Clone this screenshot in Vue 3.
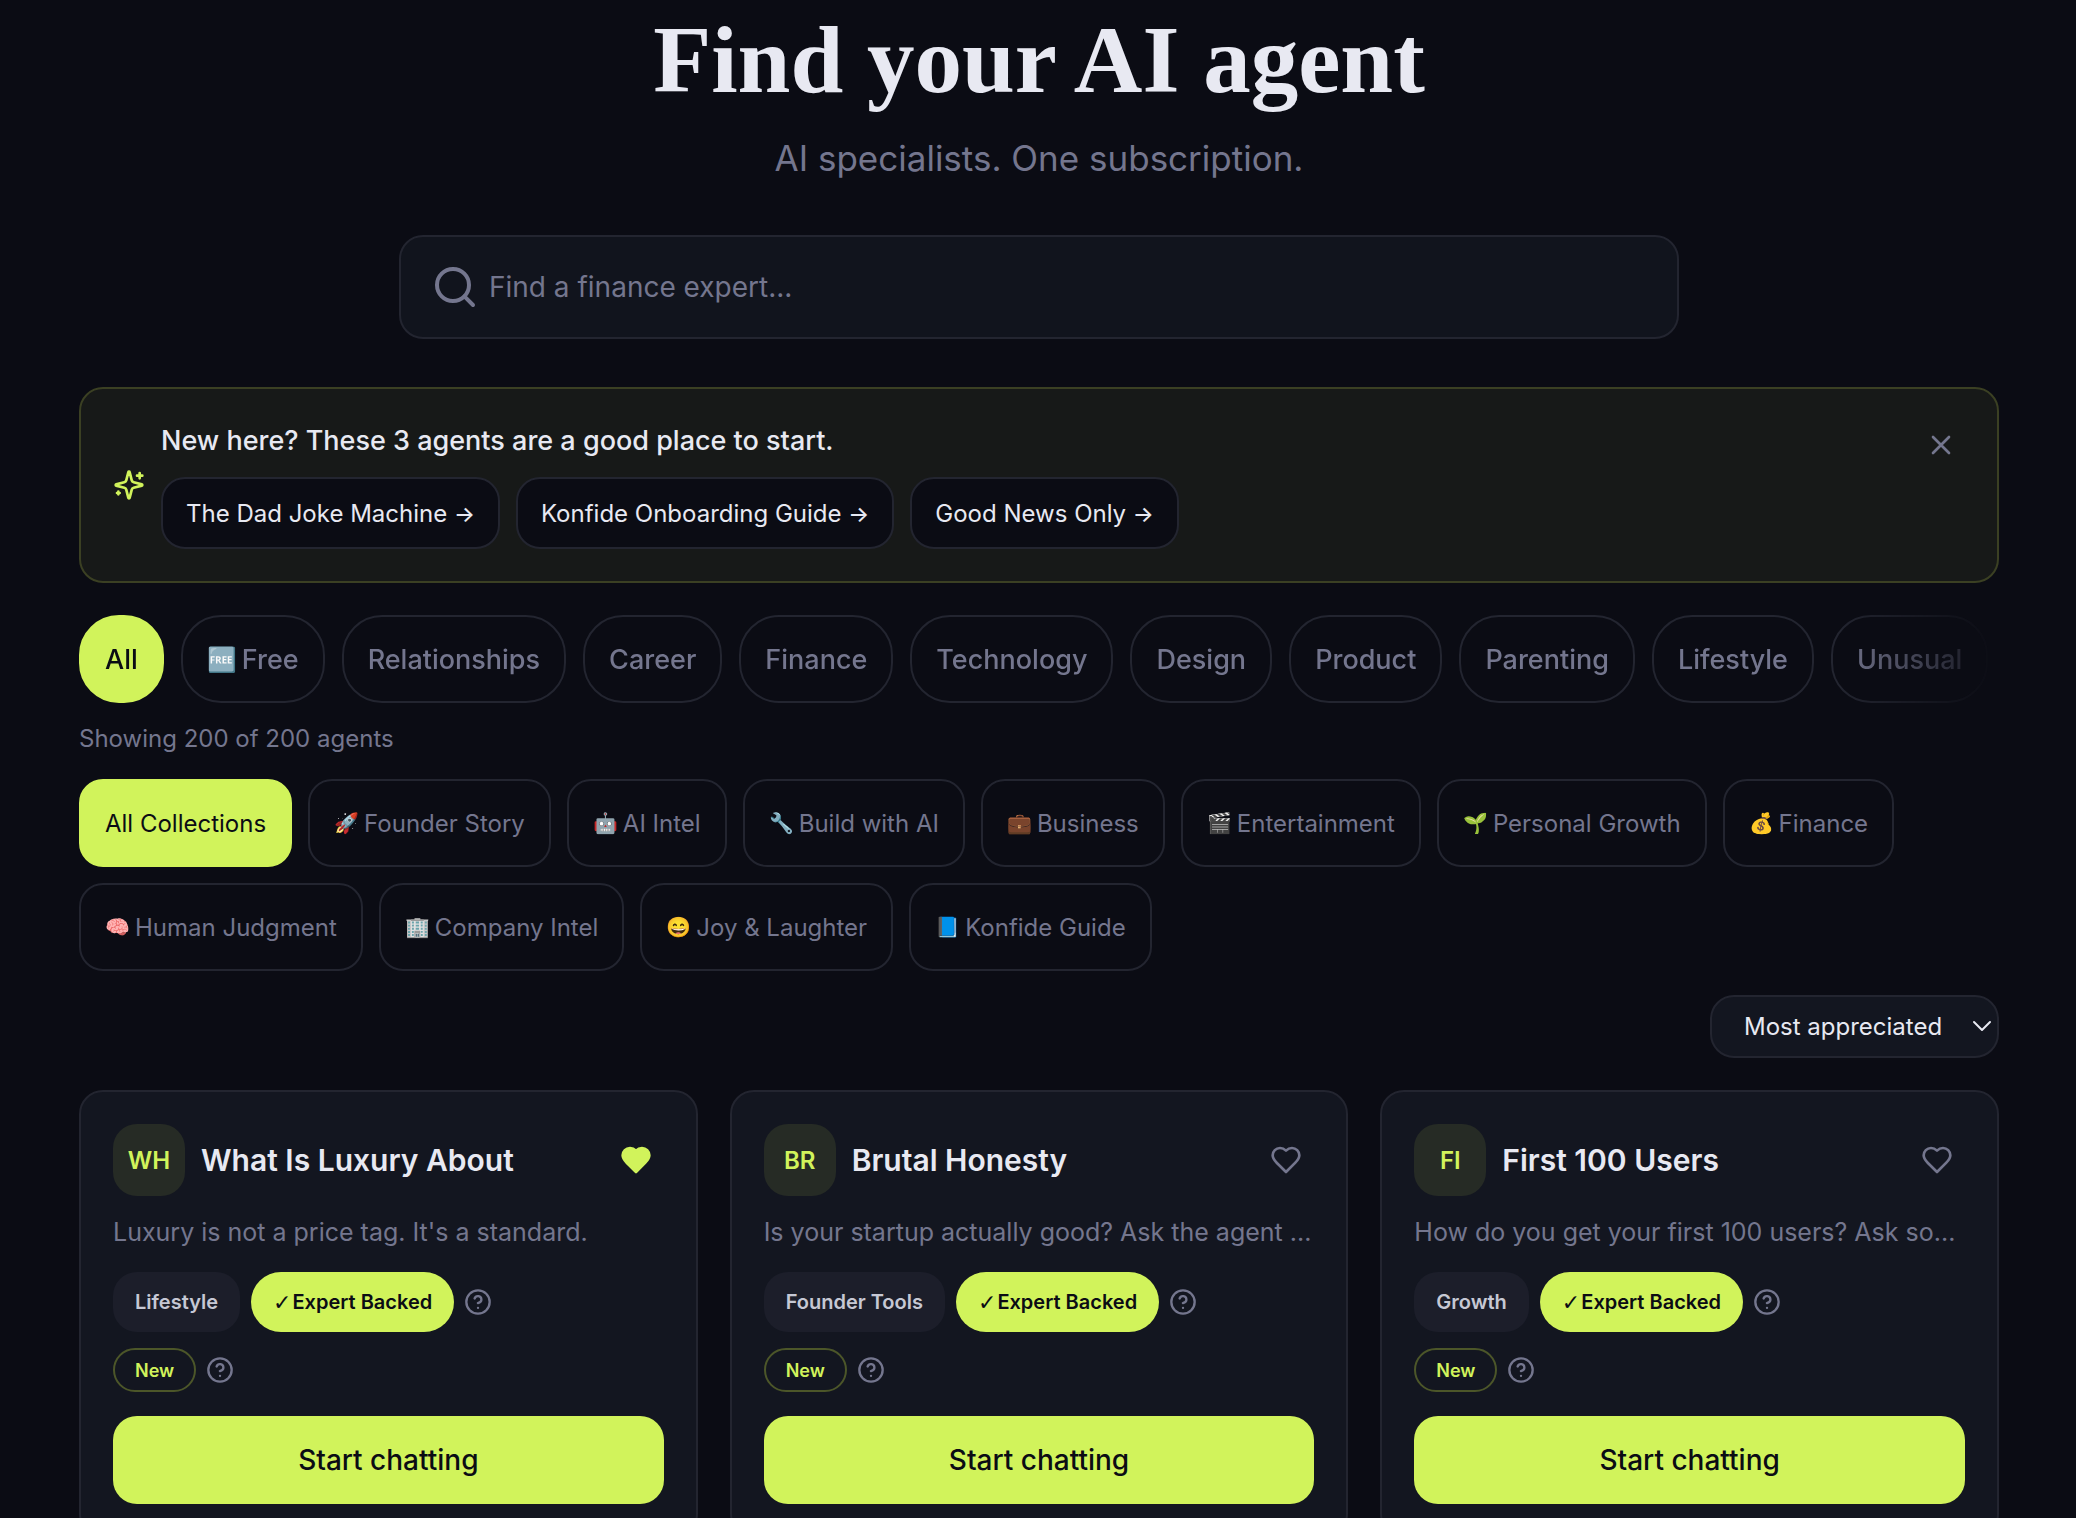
<script setup>
import { ref } from 'vue';

const starters = ['The Dad Joke Machine', 'Konfide Onboarding Guide', 'Good News Only'];

const categories = [
    { name: 'All' },
    { name: 'Free', emoji: '🆓' },
    { name: 'Relationships' },
    { name: 'Career' },
    { name: 'Finance' },
    { name: 'Technology' },
    { name: 'Design' },
    { name: 'Product' },
    { name: 'Parenting' },
    { name: 'Lifestyle' },
    { name: 'Unusual' }
];

const collections = [
    { name: 'All Collections' },
    { name: 'Founder Story', emoji: '🚀' },
    { name: 'AI Intel', emoji: '🤖' },
    { name: 'Build with AI', emoji: '🔧' },
    { name: 'Business', emoji: '💼' },
    { name: 'Entertainment', emoji: '🎬' },
    { name: 'Personal Growth', emoji: '🌱' },
    { name: 'Finance', emoji: '💰' },
    { name: 'Human Judgment', emoji: '🧠' },
    { name: 'Company Intel', emoji: '🏢' },
    { name: 'Joy & Laughter', emoji: '😄' },
    { name: 'Konfide Guide', emoji: '📘' }
];

const agents = ref([
    { code: 'WH', name: 'What Is Luxury About', desc: "Luxury is not a price tag. It's a standard.", tag: 'Lifestyle', liked: true },
    { code: 'BR', name: 'Brutal Honesty', desc: 'Is your startup actually good? Ask the agent ...', tag: 'Founder Tools', liked: false },
    { code: 'FI', name: 'First 100 Users', desc: 'How do you get your first 100 users? Ask so...', tag: 'Growth', liked: false }
]);

const keyword = ref('');
const category = ref('All');
const collection = ref('All Collections');
const sort = ref('appreciated');
const show_banner = ref(true);
</script>
<template>
    <main class="page">
        <header class="hero">
            <h1>Find your AI agent</h1>
            <p>AI specialists. One subscription.</p>
        </header>

        <label class="search">
            <svg class="icon" viewBox="0 0 24 24"><circle cx="11" cy="11" r="8" /><path d="m21 21-4.3-4.3" /></svg>
            <input v-model="keyword" type="text" aria-label="Search agents" placeholder="Find a finance expert...">
        </label>

        <section v-if="show_banner" class="banner">
            <svg class="icon spark" viewBox="0 0 24 24">
                <path d="M9.937 15.5A2 2 0 0 0 8.5 14.063l-6.135-1.582a.5.5 0 0 1 0-.962L8.5 9.936A2 2 0 0 0 9.937 8.5l1.582-6.135a.5.5 0 0 1 .963 0L14.063 8.5A2 2 0 0 0 15.5 9.937l6.135 1.581a.5.5 0 0 1 0 .964L15.5 14.063a2 2 0 0 0-1.437 1.437l-1.582 6.135a.5.5 0 0 1-.963 0z" />
                <path d="M20 3v4M22 5h-4M4 17v2M5 18H3" />
            </svg>
            <div class="banner_body">
                <p>New here? These 3 agents are a good place to start.</p>
                <div class="starters">
                    <button v-for="item in starters" :key="item" type="button">{{ item }} <span class="arrow">→</span></button>
                </div>
            </div>
            <button class="icon_btn close" type="button" aria-label="Dismiss" @click="show_banner = false">
                <svg class="icon" viewBox="0 0 24 24"><path d="M18 6 6 18M6 6l12 12" /></svg>
            </button>
        </section>

        <nav class="categories">
            <button v-for="item in categories" :key="item.name" class="pill" :class="{ active: category === item.name }"
                type="button" @click="category = item.name">
                <span v-if="item.emoji" class="emoji">{{ item.emoji }}</span>{{ item.name }}
            </button>
        </nav>

        <p class="count">Showing 200 of 200 agents</p>

        <div class="collections">
            <button v-for="item in collections" :key="item.name" class="pill" :class="{ active: collection === item.name }"
                type="button" @click="collection = item.name">
                <span v-if="item.emoji" class="emoji">{{ item.emoji }}</span>{{ item.name }}
            </button>
        </div>

        <div class="toolbar">
            <div class="sort">
                <select v-model="sort" aria-label="Sort agents">
                    <option value="appreciated">Most appreciated</option>
                </select>
                <svg class="icon" viewBox="0 0 20 12"><path d="m2 2 8 8 8-8" /></svg>
            </div>
        </div>

        <section class="cards">
            <article v-for="agent in agents" :key="agent.code" class="card">
                <div class="card_head">
                    <span class="avatar">{{ agent.code }}</span>
                    <h2>{{ agent.name }}</h2>
                    <button class="icon_btn like" :class="{ liked: agent.liked }" type="button" aria-label="Appreciate"
                        @click="agent.liked = !agent.liked">
                        <svg class="icon" viewBox="0 0 24 24">
                            <path d="M19 14c1.49-1.46 3-3.21 3-5.5A5.5 5.5 0 0 0 16.5 3c-1.76 0-3 .5-4.5 2-1.5-1.5-2.74-2-4.5-2A5.5 5.5 0 0 0 2 8.5c0 2.3 1.5 4.05 3 5.5l7 7Z" />
                        </svg>
                    </button>
                </div>
                <p class="desc">{{ agent.desc }}</p>
                <div class="tags">
                    <span class="tag">{{ agent.tag }}</span>
                    <span class="tag expert"><span class="check">✓</span>Expert Backed</span>
                    <svg class="icon help" viewBox="0 0 24 24"><circle cx="12" cy="12" r="10" /><path d="M9.09 9a3 3 0 0 1 5.83 1c0 2-3 3-3 3M12 17h.01" /></svg>
                </div>
                <div class="tags">
                    <span class="tag new">New</span>
                    <svg class="icon help" viewBox="0 0 24 24"><circle cx="12" cy="12" r="10" /><path d="M9.09 9a3 3 0 0 1 5.83 1c0 2-3 3-3 3M12 17h.01" /></svg>
                </div>
                <button class="start" type="button">Start chatting</button>
            </article>
        </section>
    </main>
</template>
<style>
body {
    background-color: #0b0c14;
}
</style>
<style scoped>
.page {
    height: 100vh;
    padding: 0 77px 0 79px;
    box-sizing: border-box;
    overflow-y: auto;
    scrollbar-width: none;
    background-color: #0b0c14;
    color: #e8e9f2;
    font-family: Inter, "Liberation Sans", sans-serif;
    font-size: 24px;
}

h1, h2, p {
    margin: 0;
}

button, input, select {
    font: inherit;
    color: inherit;
    box-sizing: border-box;
}

button {
    padding: 0;
    border: none;
    background: none;
    cursor: pointer;
}

.icon {
    flex: none;
    fill: none;
    stroke: currentColor;
    stroke-width: 2;
    stroke-linecap: round;
    stroke-linejoin: round;
}

/* 标题 */
.hero {
    padding-top: 6px;
    text-align: center;
}

.hero h1 {
    font-family: "Liberation Serif", serif;
    font-size: 95px;
    line-height: 108px;
    font-weight: 700;
}

.hero p {
    margin-top: 16px;
    color: #74768e;
    font-size: 35px;
    line-height: 56px;
}

/* 搜索框 */
.search {
    display: flex;
    align-items: center;
    gap: 10px;
    max-width: 1280px;
    height: 104px;
    margin: 49px auto 48px;
    padding: 0 30px;
    box-sizing: border-box;
    border: solid 2px #232530;
    border-radius: 24px;
    background-color: #11141d;
    color: #74768e;
}

.search .icon {
    width: 48px;
    height: 48px;
}

.search input {
    flex: 1;
    min-width: 0;
    padding: 0;
    border: none;
    outline: none;
    background: none;
    color: #e8e9f2;
    font-size: 28px;
}

.search input::placeholder {
    color: #74768e;
    opacity: 1;
}

/* 新手提示 */
.banner {
    display: flex;
    align-items: center;
    gap: 16px;
    padding: 32px;
    border: solid 2px #3b4023;
    border-radius: 24px;
    background-color: #171918;
}

.spark {
    width: 32px;
    height: 32px;
    color: #d1f35b;
}

.banner_body {
    flex: 1;
}

.banner_body p {
    font-size: 27px;
    line-height: 40px;
    font-weight: 500;
}

.starters {
    display: flex;
    gap: 16px;
    margin-top: 16px;
}

.starters button {
    height: 72px;
    padding: 0 23px;
    border: solid 2px #232530;
    border-radius: 24px;
    background-color: #0b0c14;
}

.arrow {
    font-size: 22px;
    font-weight: 500;
}

.icon_btn {
    display: flex;
    padding: 8px;
    color: #74768e;
}

.icon_btn .icon {
    width: 32px;
    height: 32px;
}

.close {
    align-self: flex-start;
}

/* 分类 */
.pill {
    display: flex;
    flex: none;
    align-items: center;
    gap: 5px;
    height: 88px;
    padding: 0 24px;
    border: solid 2px #232530;
    border-radius: 24px;
    color: #74768e;
    white-space: nowrap;
}

.pill.active {
    border-color: #d1f35b;
    background-color: #d1f35b;
    color: #0b0c14;
}

.emoji {
    font-size: 20px;
}

.categories {
    display: flex;
    gap: 17px;
    margin-top: 32px;
    overflow: hidden;
    font-size: 27px;
    font-weight: 500;
    mask-image: linear-gradient(to right, #000 calc(100% - 160px), transparent);
}

.categories .pill {
    border-radius: 40px;
}

.categories .emoji {
    font-size: 24px;
}

.count {
    margin: 18px 0 22px;
    color: #74768e;
    line-height: 36px;
}

.collections {
    display: flex;
    flex-wrap: wrap;
    gap: 16px;
}

/* 排序 */
.toolbar {
    display: flex;
    justify-content: flex-end;
    margin: 24px 0 32px;
}

.sort {
    position: relative;
}

.sort select {
    width: 289px;
    height: 63px;
    padding: 0 48px 0 32px;
    border: solid 2px #232530;
    border-radius: 24px;
    appearance: none;
    background-color: #131620;
}

.sort .icon {
    position: absolute;
    top: 25px;
    right: 7px;
    width: 20px;
    height: 12px;
    pointer-events: none;
}

/* 卡片 */
.cards {
    display: grid;
    grid-template-columns: repeat(3, minmax(0, 1fr));
    gap: 32px;
}

.card {
    padding: 32px;
    border: solid 2px #232530;
    border-radius: 24px;
    background-color: #131620;
}

.card_head {
    display: flex;
    align-items: center;
    gap: 16px;
}

.avatar {
    display: flex;
    align-items: center;
    justify-content: center;
    width: 72px;
    height: 72px;
    border-radius: 24px;
    background-color: #262b25;
    color: #d1f35b;
    font-weight: 600;
}

.card_head h2 {
    flex: 1;
    font-size: 30px;
    font-weight: 600;
}

.like {
    padding: 12px;
}

.like.liked {
    color: #d1f35b;
}

.like.liked .icon {
    fill: currentColor;
}

.desc {
    margin: 16px 0 20px;
    overflow: hidden;
    color: #74768e;
    font-size: 25px;
    line-height: 40px;
    text-overflow: ellipsis;
    white-space: nowrap;
}

.tags {
    display: flex;
    align-items: center;
    margin-top: 16px;
}

.tag {
    display: flex;
    align-items: center;
    height: 60px;
    padding: 0 22px;
    border-radius: 24px;
    background-color: #1c1e2a;
    color: #c6c8d4;
    font-size: 20px;
    font-weight: 600;
}

.tag.expert {
    gap: 1px;
    margin-left: 11px;
    border-radius: 30px;
    background-color: #d1f35b;
    color: #0b0c14;
}

.check {
    font-family: "DejaVu Sans", sans-serif;
    font-size: 22px;
    font-weight: 700;
}

.tag.new {
    height: 44px;
    padding: 0 20px;
    border: solid 2px #4c5629;
    box-sizing: border-box;
    background: none;
    color: #d1f35b;
    font-size: 18px;
}

.help {
    width: 28px;
    height: 28px;
    margin-left: 10px;
    color: #74768e;
}

.start {
    width: 100%;
    height: 88px;
    margin-top: 24px;
    border-radius: 24px;
    background-color: #d1f35b;
    color: #0b0c14;
    font-size: 28px;
    font-weight: 500;
}
</style>
